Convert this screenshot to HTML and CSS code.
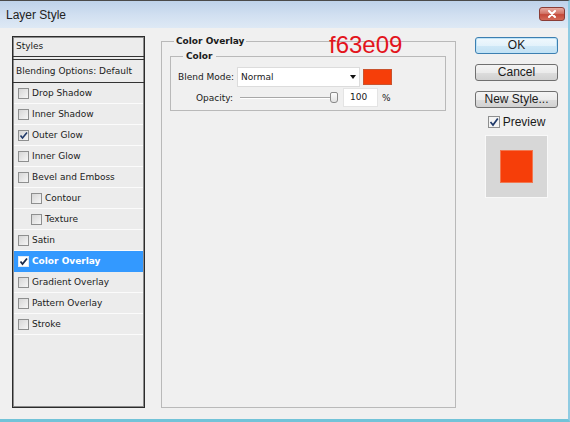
FILE: index.html
```html
<!DOCTYPE html>
<html>
<head>
<meta charset="utf-8">
<title>Layer Style</title>
<link rel="stylesheet" href="styles.css">
</head>
<body>
<div class="window">
  <div class="titlebar">
    <span class="title">Layer Style</span>
    <button class="close" aria-label="Close"><svg width="10" height="8" viewBox="0 0 10 8"><path d="M2 1 L8 7 M8 1 L2 7" stroke="#fff" stroke-width="2" stroke-linecap="round" fill="none"/></svg></button>
  </div>
  <div class="content">
    <div class="styles-list">
      <div class="list-head">Styles</div>
      <div class="list-blend">Blending Options: Default</div>
      <div class="row"><span class="cb"></span>Drop Shadow</div>
      <div class="row"><span class="cb"></span>Inner Shadow</div>
      <div class="row"><span class="cb"><svg width="9" height="9" viewBox="0 0 9 9"><path d="M1.5 4.5 L3.5 7 L8 1.5" stroke="#203a6a" stroke-width="1.6" fill="none"/></svg></span>Outer Glow</div>
      <div class="row"><span class="cb"></span>Inner Glow</div>
      <div class="row"><span class="cb"></span>Bevel and Emboss</div>
      <div class="row sub"><span class="cb"></span>Contour</div>
      <div class="row sub"><span class="cb"></span>Texture</div>
      <div class="row"><span class="cb"></span>Satin</div>
      <div class="row active"><span class="cb white"><svg width="9" height="9" viewBox="0 0 9 9"><path d="M1.5 4.5 L3.5 7 L8 1.5" stroke="#1a2a4a" stroke-width="1.8" fill="none"/></svg></span>Color Overlay</div>
      <div class="row"><span class="cb"></span>Gradient Overlay</div>
      <div class="row"><span class="cb"></span>Pattern Overlay</div>
      <div class="row"><span class="cb"></span>Stroke</div>
    </div>

    <fieldset class="group">
      <legend class="legend-outer">Color Overlay</legend>
      <span class="annot">f63e09</span>
      <fieldset class="subgroup">
        <legend class="legend-inner">Color</legend>
        <div class="field-row">
          <span class="label">Blend Mode:</span>
          <div class="select"><span>Normal</span><span class="arrow"></span></div>
          <span class="swatch"></span>
        </div>
        <div class="field-row opacity">
          <span class="label">Opacity:</span>
          <div class="slider"><span class="track"></span><span class="thumb"></span></div>
          <div class="num">100</div>
          <span class="pct">%</span>
        </div>
      </fieldset>
    </fieldset>

    <div class="actions">
      <button class="btn default">OK</button>
      <button class="btn">Cancel</button>
      <button class="btn">New Style...</button>
      <label class="preview-check"><span class="cb big"><svg width="10" height="10" viewBox="0 0 10 10"><path d="M1.5 5 L4 8 L8.8 1.5" stroke="#203a6a" stroke-width="1.7" fill="none"/></svg></span>Preview</label>
      <div class="preview-box"><span class="preview-swatch"></span></div>
    </div>
  </div>
</div>
</body>
</html>
```

FILE: styles.css
```css
html, body {
  margin: 0;
  padding: 0;
}
body {
  width: 570px;
  height: 422px;
  overflow: hidden;
  background: #f0f0f0;
}
.window {
  width: 570px;
  height: 422px;
  box-sizing: border-box;
  border-top: 1px solid #4a4a4a;
  border-right: 2px solid #8fcbe2;
  border-bottom: 3px solid #72c3d8;
  background: #f0f0f0;
  font-family: "DejaVu Sans", sans-serif;
  font-size: 9px;
  color: #1a1a1a;
}
.titlebar {
  height: 27px;
  display: flex;
  align-items: center;
  justify-content: space-between;
  padding: 0 3px 0 6px;
  background: linear-gradient(#bed2ea, #d2e0f1 55%, #dee9f5);
}
.title {
  font-family: "Liberation Sans", Arial, sans-serif;
  font-size: 12px;
  color: #222;
  margin-top: 1px;
}
.close {
  width: 26px;
  height: 14px;
  margin-top: -1px;
  padding: 0;
  border: 1px solid #8a3d36;
  border-radius: 3px;
  background: linear-gradient(#e8aaa0, #d27668 45%, #c44a3a 55%, #d36a58);
  display: flex;
  align-items: center;
  justify-content: center;
}
.content {
  display: flex;
  align-items: flex-start;
  padding: 8px 0 0 12px;
}

/* Styles list */
.styles-list {
  width: 133px;
  height: 372px;
  box-sizing: border-box;
  border: 1px solid #2c2c2c;
  box-shadow: inset 0 0 0 1px #8c8c8c;
  background: #ececec;
  flex: none;
  white-space: nowrap;
}
.list-head {
  height: 19px;
  line-height: 19px;
  padding-left: 3px;
  border-bottom: 1px solid #333;
}
.list-blend {
  margin-top: 2px;
  height: 22px;
  line-height: 22px;
  padding-left: 3px;
  border-top: 1px solid #333;
  border-bottom: 1px solid #333;
}
.row {
  height: 20px;
  border-bottom: 1px solid #fbfbfb;
  display: flex;
  align-items: center;
  padding-left: 4px;
  margin: 0 1px;
}
.row.sub {
  padding-left: 17px;
}
.row.active {
  background: #3399ff;
  color: #fff;
  font-weight: bold;
  border-bottom-color: #3399ff;
}
.cb {
  width: 11px;
  height: 11px;
  box-sizing: border-box;
  border: 1px solid #8e8f8f;
  background: linear-gradient(135deg, #d6d6d6, #f6f6f6);
  margin-right: 3px;
  display: inline-flex;
  align-items: center;
  justify-content: center;
  flex: none;
}
.cb.white {
  background: #fff;
  border-color: #dfe9f5;
}

/* Group box */
.group {
  margin: 0 0 0 16px;
  padding: 0 9px 0 8px;
  width: 295px;
  height: 372px;
  box-sizing: border-box;
  border: 1px solid #b9b9b9;
  position: relative;
  flex: none;
  min-width: 0;
}
.legend-outer {
  font-weight: bold;
  line-height: 11px;
  padding: 0 2px;
  margin-left: 4px;
}
.annot {
  position: absolute;
  left: 167px;
  top: -14px;
  font-family: "Liberation Sans", Arial, sans-serif;
  font-size: 24px;
  line-height: 24px;
  color: #e3141c;
}
.subgroup {
  margin: 4px 0 0 0;
  padding: 5px 6px 3px 7px;
  border: 1px solid #b9b9b9;
  min-width: 0;
}
.legend-inner {
  font-weight: bold;
  line-height: 11px;
  padding: 0 3px;
  margin-left: 5px;
}
.field-row {
  display: flex;
  align-items: center;
  height: 20px;
  white-space: nowrap;
}
.field-row.opacity {
  margin-top: 1px;
  height: 19px;
}
.label {
  width: 55px;
  text-align: right;
  flex: none;
  white-space: nowrap;
}
.select {
  margin-left: 4px;
  width: 123px;
  height: 20px;
  box-sizing: border-box;
  border: 1px solid #dcdcdc;
  background: #fff;
  display: flex;
  align-items: center;
  justify-content: space-between;
  padding: 0 3px 0 3px;
  flex: none;
}
.arrow {
  width: 0;
  height: 0;
  border-left: 3.5px solid transparent;
  border-right: 3.5px solid transparent;
  border-top: 4px solid #111;
}
.swatch {
  margin-left: 3px;
  width: 29px;
  height: 16px;
  box-sizing: border-box;
  background: #f63e09;
  border: 1px solid #c9532e;
  flex: none;
}
.slider {
  margin-left: 7px;
  width: 98px;
  height: 12px;
  position: relative;
  display: flex;
  align-items: center;
  flex: none;
}
.track {
  display: block;
  width: 92px;
  height: 1px;
  background: #a8a8a8;
  border-bottom: 1px solid #fff;
}
.thumb {
  position: absolute;
  right: 0;
  top: 0;
  width: 8px;
  height: 11px;
  box-sizing: border-box;
  border: 1px solid #8a8a8a;
  border-radius: 2px 2px 3px 3px;
  background: linear-gradient(#fdfdfd, #e2e2e2);
}
.num {
  margin-left: 5px;
  width: 35px;
  height: 19px;
  box-sizing: border-box;
  background: #fff;
  border: 1px solid #e4e4e4;
  padding-left: 6px;
  line-height: 17px;
  flex: none;
}
.pct {
  margin-left: 4px;
}

/* Buttons */
.actions {
  margin-left: 19px;
  width: 83px;
  padding-top: 1px;
  display: flex;
  flex-direction: column;
  align-items: center;
  flex: none;
}
.btn {
  width: 83px;
  height: 17px;
  margin: 0 0 10px 0;
  padding: 0;
  box-sizing: border-box;
  border: 1px solid #707070;
  border-radius: 3px;
  background: linear-gradient(#f4f4f4, #ebebeb 50%, #dddddd 51%, #d1d1d1);
  font-family: "Liberation Sans", Arial, sans-serif;
  font-size: 12px;
  line-height: 15px;
  color: #1a1a1a;
}
.btn.default {
  border-color: #3c7fb1;
  background: linear-gradient(#f0f8fd, #e3f2fb 50%, #cfe8f7 51%, #c2e1f4);
  box-shadow: inset 0 0 0 1px #bfe3f7;
}
.preview-check {
  margin-top: -3px;
  height: 13px;
  display: flex;
  align-items: center;
  font-family: "Liberation Sans", Arial, sans-serif;
  font-size: 12px;
  color: #1a1a1a;
}
.cb.big {
  width: 12px;
  height: 12px;
  background: #f4f4f4;
  border-color: #8e8f8f;
}
.preview-box {
  margin-top: 7px;
  width: 63px;
  height: 63px;
  box-sizing: border-box;
  background: #d7d7d7;
  border: 1px solid #f8f8f8;
  display: flex;
  align-items: center;
  justify-content: center;
}
.preview-swatch {
  width: 31px;
  height: 31px;
  background: #f63e09;
  box-shadow: 0 0 0 1px #f2774f;
}
```
